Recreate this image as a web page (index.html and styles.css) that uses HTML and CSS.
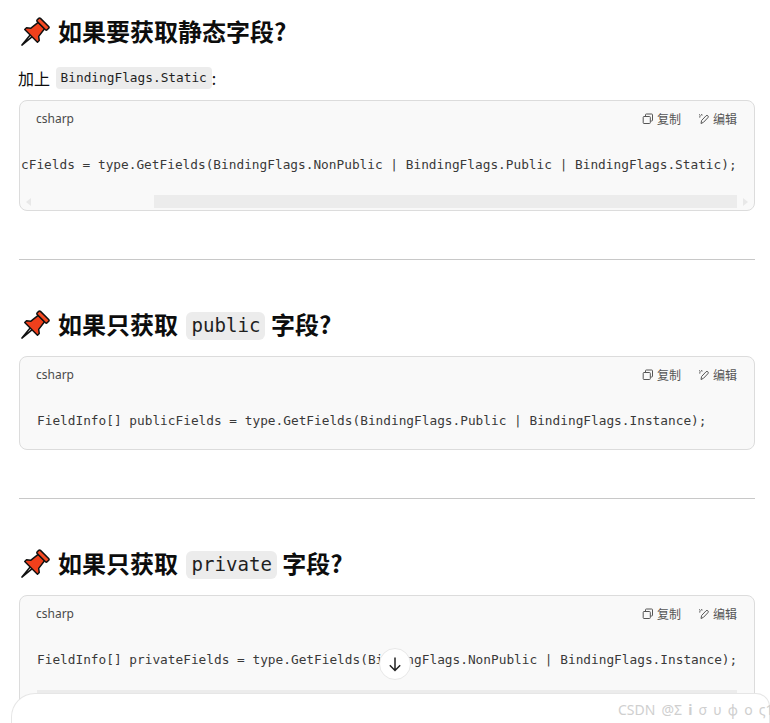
FILE: index.html
```html
<!DOCTYPE html>
<html lang="zh-CN">
<head>
<meta charset="utf-8">
<title>BindingFlags</title>
<link rel="stylesheet" href="styles.css">
</head>
<body>
<svg class="defs" width="0" height="0" aria-hidden="true">
  <symbol id="pin" viewBox="0 0 30 30">
    <g transform="rotate(45 15 15)" stroke="#111" stroke-width="1.5" stroke-linejoin="round">
      <path d="M13.6 19h2.8L15 33.5z" fill="#f4f4f4"/>
      <path d="M10.5 6h9l1.2 9.5 3.3 2.5v2.5H6V18l3.300-2.500z" fill="#f0401c"/>
      <rect x="8" y="1.500" width="14" height="4.500" rx="1.200" fill="#f64a22"/>
    </g>
  </symbol>
  <symbol id="copy" viewBox="0 0 12 12">
    <path d="M3.500 3V1.800q0-.8.8-.8h5.400q.8 0 .8.8v5.400q0 .8-.8.800H8.500M2 3.500h5.500q.8 0 .8.800v5.400q0 .8-.8.800H2q-.8 0-.8-.8V4.300q0-.8.800-.8z" fill="none" stroke="#555" stroke-width="1"/>
  </symbol>
  <symbol id="edit" viewBox="0 0 12 12">
    <path d="M3 10.500 3.600 7.500 8 2.800q1-.9 1.900 0t0 1.900L5.500 9.300zM1 1.500l1.500 1M3.600 1l.4 1.600M1 4l1.500-.2" fill="none" stroke="#555" stroke-width="1"/>
  </symbol>
</svg>

<main class="page">
  <h2 class="title"><svg class="pin"><use href="#pin"/></svg>如果要获取静态字段?</h2>
  <p class="lead">加上 <code class="chip">BindingFlags.Static</code>:</p>
  <section class="card">
    <header class="card-head">
      <span class="lang">csharp</span>
      <span class="actions">
        <span class="act"><svg class="ico"><use href="#copy"/></svg>复制</span>
        <span class="act"><svg class="ico"><use href="#edit"/></svg>编辑</span>
      </span>
    </header>
    <pre class="code scrolled">cFields = type.GetFields(BindingFlags.NonPublic | BindingFlags.Public | BindingFlags.Static);</pre>
    <div class="bar">
      <span class="arrow left"></span>
      <span class="track"><span class="thumb"></span></span>
      <span class="arrow right"></span>
    </div>
  </section>

  <hr class="rule">

  <h2 class="title"><svg class="pin"><use href="#pin"/></svg>如果只获取 <code class="chip big">public</code> 字段?</h2>
  <section class="card plain">
    <header class="card-head">
      <span class="lang">csharp</span>
      <span class="actions">
        <span class="act"><svg class="ico"><use href="#copy"/></svg>复制</span>
        <span class="act"><svg class="ico"><use href="#edit"/></svg>编辑</span>
      </span>
    </header>
    <pre class="code">FieldInfo[] publicFields = type.GetFields(BindingFlags.Public | BindingFlags.Instance);</pre>
  </section>

  <hr class="rule">

  <h2 class="title"><svg class="pin"><use href="#pin"/></svg>如果只获取 <code class="chip big">private</code> 字段?</h2>
  <section class="card last">
    <header class="card-head">
      <span class="lang">csharp</span>
      <span class="actions">
        <span class="act"><svg class="ico"><use href="#copy"/></svg>复制</span>
        <span class="act"><svg class="ico"><use href="#edit"/></svg>编辑</span>
      </span>
    </header>
    <pre class="code">FieldInfo[] privateFields = type.GetFields(BindingFlags.NonPublic | BindingFlags.Instance);</pre>
    <div class="bar low"><span class="track full"></span></div>
  </section>
</main>

<button class="down" aria-label="向下滚动">
  <svg width="14" height="16" viewBox="0 0 14 16"><path d="M7 1.500v13M1.800 9.300 7 14.500l5.200-5.200" fill="none" stroke="#222" stroke-width="1.500"/></svg>
</button>
<div class="composer"></div>
<div class="mark">CSDN @Σ <b>i</b> σ υ φ ο ς19</div>
</body>
</html>
```
FILE: styles.css
```css
* { box-sizing: border-box; }
html, body { margin: 0; height: 723px; overflow: hidden; background: #fff; }
body {
  position: relative;
  font-family: "Noto Sans CJK SC", "Noto Sans", sans-serif;
  color: #0d0d0d;
}
.defs { position: absolute; }
.page { height: 723px; overflow: hidden; padding: 0 15px 0 19px; }

.title {
  display: flex;
  align-items: center;
  height: 34px;
  margin: 0;
  padding: 0 0 2px 1px;
  font-size: 24px;
  font-weight: 700;
  line-height: 32px;
  white-space: pre;
}
.title:first-child { margin-top: 15px; }
.pin { width: 30px; height: 30px; margin: 2px 8px 0 0; flex: none; }

.lead {
  margin: 16px 0 0 -1px;
  height: 26px;
  font-size: 16px;
  line-height: 26px;
  display: flex;
  align-items: center;
  white-space: pre;
}
.chip {
  font-family: "DejaVu Sans Mono", monospace;
  font-size: 12.790px;
  font-weight: 400;
  background: #ececec;
  border-radius: 4px;
  padding: 0 5px;
  margin-left: 2px;
  line-height: 22px;
  color: #1f1f1f;
}
.chip.big {
  font-size: 19.100px;
  line-height: 28px;
  padding: 0 5px;
  border-radius: 6px;
  margin: 4px 0 0 3px;
}

.card {
  margin-top: 9px;
  height: 111px;
  background: #f9f9f9;
  border: 1px solid #dcdcdc;
  border-radius: 8px;
  display: flex;
  flex-direction: column;
  overflow: hidden;
}
.title + .card { margin-top: 14px; }
.card.plain { height: 94px; }
.card.last { height: 128px; }
.card-head {
  display: flex;
  justify-content: space-between;
  align-items: center;
  height: 35px;
  padding: 0 17px 0 16px;
  font-size: 12px;
  color: #555;
  flex: none;
}
.lang { font-family: "Noto Sans", sans-serif; color: #4a4a4a; }
.actions { display: flex; gap: 17px; }
.act { display: flex; align-items: center; gap: 3px; }
.ico { width: 12px; height: 12px; }

.code {
  margin: 19px 0 0;
  padding-left: 17px;
  font-family: "DejaVu Sans Mono", monospace;
  font-size: 12.790px;
  line-height: 20px;
  color: #3a3a3a;
  white-space: pre;
  flex: none;
}
.code.scrolled { padding-left: 1px; }

.bar {
  display: flex;
  align-items: center;
  height: 13px;
  margin-top: 20px;
  padding: 0 6px;
  flex: none;
}
.bar.low { padding: 0 17px; }
.track { flex: 1; height: 13px; display: flex; justify-content: flex-end; }
.track.full { background: #ececec; }
.thumb { width: 583px; height: 100%; background: #ececec; }
.arrow { width: 0; height: 0; border-style: solid; border-color: transparent; }
.arrow.left { border-width: 4px 5px 4px 0; border-right-color: #e8e8e8; margin-right: 2px; }
.arrow.right { border-width: 4px 0 4px 5px; border-left-color: #e8e8e8; margin-left: 6px; }

.rule {
  margin: 48px 0 48px;
  border: 0;
  border-top: 1px solid #c8c8c8;
  height: 0;
}

.down {
  position: absolute;
  left: 379px;
  top: 648px;
  width: 32px;
  height: 32px;
  padding: 0;
  border: 1px solid #e8e8e8;
  border-radius: 50%;
  background: #fff;
  display: flex;
  align-items: center;
  justify-content: center;
  z-index: 2;
}
.composer {
  position: absolute;
  left: 11px;
  right: 0;
  top: 693px;
  bottom: 0;
  background: #fff;
  border: 1px solid #e6e6e6;
  border-bottom: 0;
  border-radius: 24px 14px 0 0;
  z-index: 1;
}
.mark {
  position: absolute;
  left: 618px;
  right: 0;
  top: 701px;
  overflow: hidden;
  white-space: nowrap;
  font-family: "Noto Sans", sans-serif;
  font-size: 14px;
  line-height: 18px;
  word-spacing: 2.500px;
  color: #cfcfcf;
  z-index: 3;
}
.mark b { font-weight: 700; }
```
